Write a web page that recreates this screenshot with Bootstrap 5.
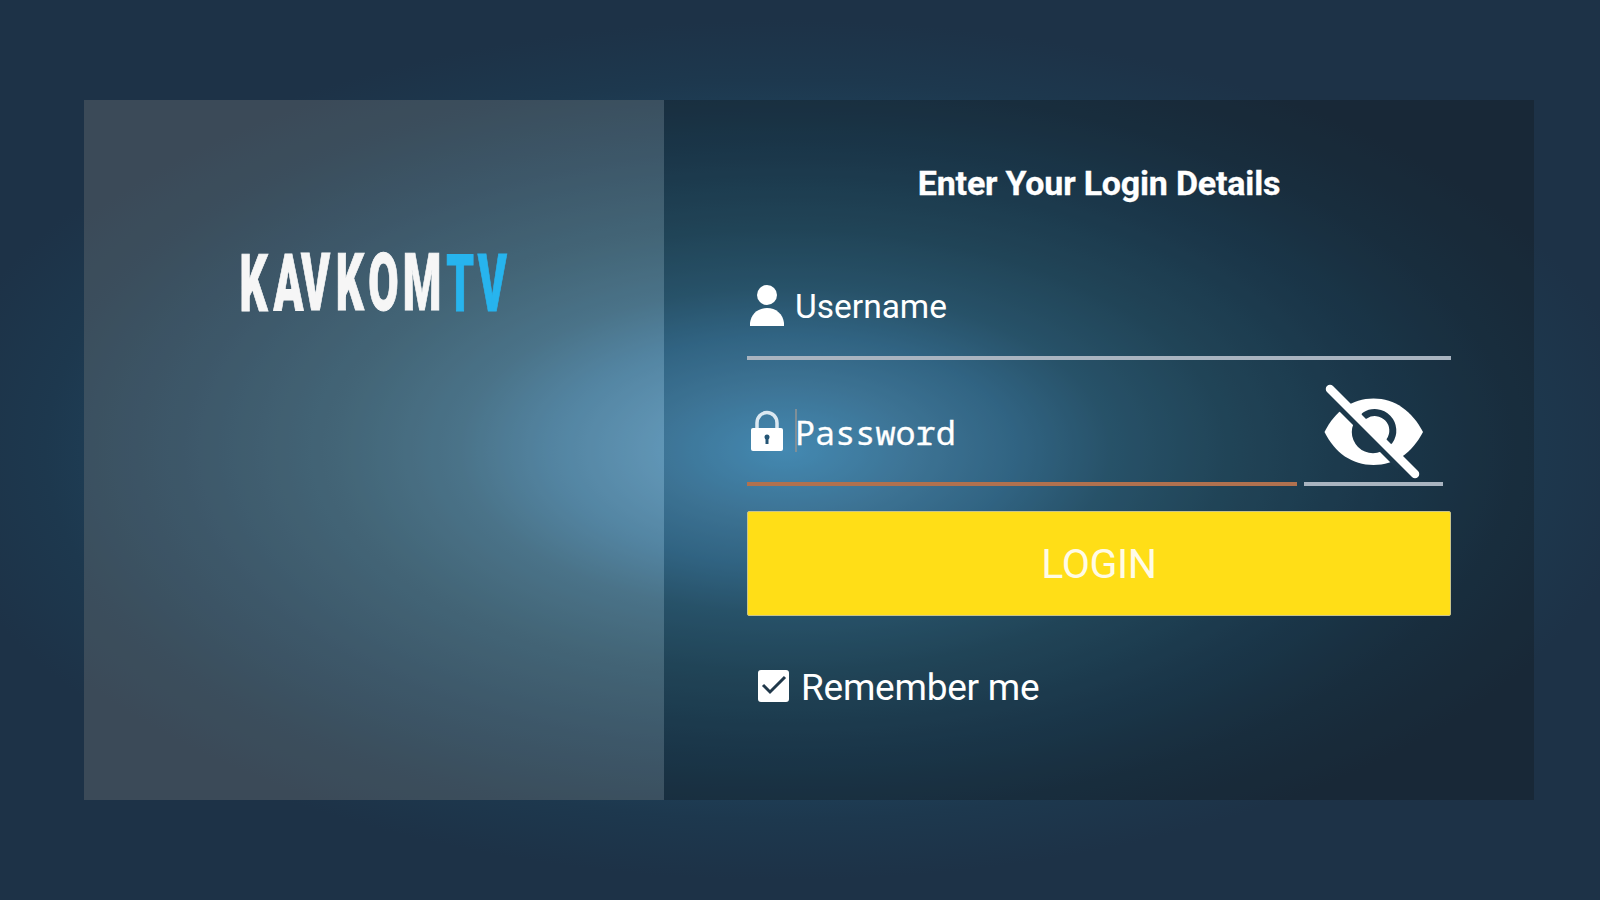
<!DOCTYPE html>
<html lang="en">
<head>
    <meta charset="UTF-8">
    <meta name="viewport" content="width=device-width, initial-scale=1.0">
    <title>KavkomTV - Login</title>
    <link href="https://cdn.jsdelivr.net/npm/bootstrap@5.3.0/dist/css/bootstrap.min.css" rel="stylesheet">
    <style>
        body {
            font-family: Roboto, "Liberation Sans", sans-serif;
            color: #fff;
            background: radial-gradient(ellipse 860px 430px at 785px 450px,
                #56b0e6 0%, #4c92be 16%, #3d7fa8 27%, #316887 38%, #285670 52%, #20445e 70%, #1d384e 86%, #1d3247 100%);
        }
        .login-page { height: 900px; padding: 100px 66px 100px 84px; }
        .brand-side { width: 580px; background-color: rgba(155, 150, 142, .24); padding-top: 128px; }
        .form-side { background-color: rgba(10, 10, 5, .23); padding: 63px 83px 0 83px; }
        .form-title { font-size: 34px; line-height: 40px; letter-spacing: -.2px; -webkit-text-stroke: .3px #fff; }
        .field-row { height: 104px; padding-top: 2px; border-bottom: 4px solid #a9b4c0; }
        .field-label { font-size: 33.5px; line-height: 40px; }
        .user-row { margin-top: 53px; }
        .pass-row { margin-top: 22px; }
        .pass-field { width: 550px; padding-top: 0; border-bottom-color: #b0714f; }
        .pass-label { font-family: "Noto Sans Mono", "DejaVu Sans Mono", monospace; font-size: 33.5px; line-height: 40px; -webkit-text-stroke: .3px #fff; }
        .caret-bar { width: 2px; height: 43px; margin-left: 8px; margin-right: -2px; margin-top: -4px; background-color: #7f8f98; }
        .eye-field { width: 139px; margin-left: 7px; padding-top: 0; }
        .btn-login { background-color: #ffde17; color: #fffbe6; height: 105px; font-size: 41px; letter-spacing: -.4px; padding: 3px 0 0; border: 1px solid #c9c48a; border-radius: 2px; margin-top: 25px; }
        .remember-row { margin-top: 50px; padding-left: 11px; }
        .remember-label { font-size: 37px; line-height: 40px; letter-spacing: -.25px; margin-left: 11px; padding-top: 2px; }
    </style>
</head>
<body>
    <main class="login-page d-flex">
        <section class="brand-side d-flex justify-content-center align-items-start">
            <svg width="300" height="120" viewBox="-10 -12 300 120" aria-label="KavkomTV">
                <g transform="translate(0 -1) scale(.55 1)" font-family="Roboto" font-weight="900" font-size="80" stroke-width="1">
                    <text fill="#f6f6f6" stroke="#f6f6f6" y="72 72 71 71 71 71" x="10 72 122 185 244 307">KAVKOM</text>
                    <text fill="#27b4ee" stroke="#27b4ee" y="72 72" x="386 443">TV</text>
                </g>
            </svg>
        </section>

        <section class="form-side flex-grow-1">
            <h1 class="form-title fw-bold text-center mb-0">Enter Your Login Details</h1>

            <form>
                <div class="user-row field-row d-flex align-items-center">
                    <svg width="40" height="46" viewBox="0 0 40 46" fill="#fff">
                        <circle cx="20" cy="11" r="10"/>
                        <path d="M3 42v-3c1-9 8-15 17-15s16 6 17 15v3z"/>
                    </svg>
                    <label class="field-label ms-2">Username</label>
                </div>

                <div class="pass-row d-flex">
                    <div class="pass-field field-row d-flex align-items-center">
                        <svg width="40" height="46" viewBox="0 0 40 46">
                            <path d="M10 20v-6a10 10.500 0 0 1 20 0v6" fill="none" stroke="#dbe8f1" stroke-width="3.500"/>
                            <path d="M6 19h28q2 0 2 2v19q0 2-2 2H6q-2 0-2-2V21q0-2 2-2z" fill="#fff"/>
                            <path d="M20 28v7" stroke="#245575" stroke-width="3"/>
                            <circle cx="20" cy="28" r="2.500" fill="#245575"/>
                        </svg>
                        <span class="caret-bar"></span>
                        <label class="pass-label">Password</label>
                    </div>
                    <div class="eye-field field-row d-flex justify-content-center">
                        <!-- crossed-out eye, pupil open on the upper side of the bar -->
                        <svg width="100" height="98" viewBox="0 0 100 98">
                            <path d="M.5 50C11 29 28 16.500 49.500 16.500S88 29 99 50C88 71 71 83 49.500 83S11 71 .5 50z" fill="#fff"/>
                            <path d="M34 35A21 21 0 0 0 64 65z" fill="#1c384b"/>
                            <path d="M41 33.500A18 18 0 0 1 65.500 59" fill="none" stroke="#1c384b" stroke-width="7" stroke-linecap="round"/>
                            <path d="M13 22L76 85" stroke="#1c384b" stroke-width="7"/>
                            <path d="M6 7L91 92" stroke="#fff" stroke-width="8.500" stroke-linecap="round"/>
                        </svg>
                    </div>
                </div>

                <button type="button" class="btn btn-login w-100">LOGIN</button>

                <div class="remember-row d-flex align-items-center">
                    <svg width="32" height="34" viewBox="0 0 32 34">
                        <rect width="31" height="32" rx="3" fill="#fff"/>
                        <path d="M5 15l7 7L27 7" fill="none" stroke="#20384a" stroke-width="3"/>
                    </svg>
                    <label class="remember-label">Remember me</label>
                </div>
            </form>
        </section>
    </main>
    <script src="https://cdn.jsdelivr.net/npm/bootstrap@5.3.0/dist/js/bootstrap.bundle.min.js"></script>
</body>
</html>
